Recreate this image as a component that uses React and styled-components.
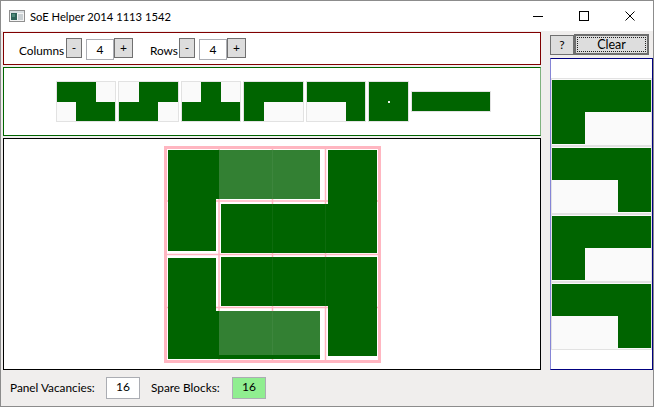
import React from 'react';
import styled, { createGlobalStyle } from 'styled-components';

const FONT = `"Lato", "Noto Sans", "Liberation Sans", sans-serif`;
const DARK = '#006400';
const LIGHT = '#338033';
const PINK = '#ffb6c1';

const Global = createGlobalStyle`
  html, body { margin: 0; padding: 0; background: #f0eeed; }
  body { font-family: ${FONT}; font-size: 12px; color: #000; }
  * { box-sizing: border-box; }
`;

const Window = styled.div`
  width: 654px;
  height: 407px;
  border: 1px solid #8c8c8c;
  background: #f0eeed;
  display: flex;
  flex-direction: column;
  overflow: hidden;
`;

const TitleBar = styled.div`
  height: 30px;
  background: #fff;
  display: flex;
  align-items: center;
  padding-left: 8px;
  flex-shrink: 0;
`;

const Title = styled.span`
  margin-left: 5px;
  font-size: 11.2px;
  line-height: 16px;
  margin-top: 1px;
`;

const WinButtons = styled.div`
  margin-left: auto;
  display: flex;
  height: 30px;
`;

const WinButton = styled.div`
  width: 46px;
  height: 30px;
  display: flex;
  align-items: center;
  justify-content: center;
`;

const Body = styled.div`
  flex: 1;
  display: flex;
  flex-direction: column;
  padding: 1px 0 0 1px;
`;

const MainRow = styled.div`
  display: flex;
  height: 338px;
  gap: 9px;
`;

const LeftColumn = styled.div`
  width: 538px;
  margin-left: 1px;
  display: flex;
  flex-direction: column;
  gap: 2px;
`;

const Toolbar = styled.div`
  height: 33px;
  border: 1px solid #800000;
  background: #fff;
  display: flex;
  align-items: flex-start;
  padding: 5px 0 0 15px;
`;

const Label = styled.span`
  width: ${p => p.$w}px;
  margin-left: ${p => p.$ml || 0}px;
  padding-top: 5px;
  font-size: 11.8px;
  line-height: 16px;
  white-space: nowrap;
`;

const StepButton = styled.div`
  width: ${p => p.$w}px;
  height: 20px;
  background: #dddddd;
  border: 1px solid #707070;
  display: flex;
  align-items: center;
  justify-content: center;
  font-size: 12px;
  line-height: 16px;
  margin-right: ${p => p.$mr || 0}px;
`;

const NumBox = styled.div`
  width: ${p => p.$w}px;
  height: ${p => p.$h}px;
  margin-top: ${p => p.$mt || 0}px;
  border: 1px solid #abadb3;
  background: ${p => p.$bg || '#fff'};
  text-align: center;
  line-height: ${p => p.$lh}px;
  font-size: 12px;
`;

const Strip = styled.div`
  height: 69px;
  border: 1px solid ${DARK};
  border-right-color: #7fb27f;
  background: #fff;
  display: flex;
  align-items: center;
  justify-content: center;
  gap: 2px;
  padding-left: 3px;
`;

const PieceCard = styled.div`
  display: grid;
  grid-template-columns: repeat(${p => p.$cols}, ${p => p.$cw}px);
  grid-auto-rows: ${p => p.$ch}px;
  padding: ${p => p.$pad || '0'};
  border: 1px solid #e2e2e2;
  background: #fafafa;
  flex-shrink: 0;
  position: relative;
`;

const Cell = styled.div`
  background: ${p => (p.$on ? DARK : 'transparent')};
`;

const Dot = styled.div`
  position: absolute;
  left: 50%;
  top: 50%;
  width: 2px;
  height: 2px;
  margin: -1px 0 0 -1px;
  background: #e8f0e8;
`;

const MainPanel = styled.div`
  height: 232px;
  border: 1px solid #000;
  background: #fff;
  display: flex;
  align-items: center;
  justify-content: center;
  padding-left: 1px;
`;

const RightColumn = styled.div`
  width: 103px;
  display: flex;
  flex-direction: column;
  padding-top: 2px;
`;

const ButtonRow = styled.div`
  display: flex;
  height: 21px;
  align-items: flex-start;
`;

const HelpButton = styled.div`
  width: 24px;
  height: 20px;
  margin-top: 1px;
  background: #dddddd;
  border: 1px solid #707070;
  display: flex;
  align-items: center;
  justify-content: center;
  font-size: 12px;
  line-height: 16px;
`;

const ClearButton = styled.div`
  width: 75px;
  height: 21px;
  background: #dddddd;
  border: 2px solid #6e6e6e;
  position: relative;
  display: flex;
  align-items: center;
  justify-content: center;
  font-size: 12.5px;
  line-height: 16px;
  &::after {
    content: '';
    position: absolute;
    inset: 1px;
    border: 1px dotted #202020;
  }
`;

const ListPanel = styled.div`
  margin-top: 3px;
  height: 312px;
  border: 1px solid #000080;
  border-left-color: #8585d6;
  background: #fff;
  padding-top: 19px;
  display: flex;
  flex-direction: column;
`;

const StatusBar = styled.div`
  height: 36px;
  display: flex;
  align-items: center;
  padding-left: 8px;
`;

const StatLabel = styled.span`
  width: ${p => p.$w}px;
  margin-left: ${p => p.$ml || 0}px;
  line-height: 16px;
  white-space: nowrap;
  font-size: 11.8px;
`;

const Piece = ({ rows, cw, ch, pad, dot }) => (
  <PieceCard $cols={rows[0].length} $cw={cw} $ch={ch} $pad={pad}>
    {rows.flat().map((v, i) => (
      <Cell key={i} $on={v === 1} />
    ))}
    {dot && <Dot />}
  </PieceCard>
);

const stripPieces = [
  [[1, 1, 0], [0, 1, 1]],
  [[0, 1, 1], [1, 1, 0]],
  [[0, 1, 0], [1, 1, 1]],
  [[1, 1, 1], [1, 0, 0]],
  [[1, 1, 1], [0, 0, 1]],
  [[1, 1], [1, 1]],
  [[1, 1, 1, 1]],
];

const listPieces = [
  [[1, 1, 1], [1, 0, 0]],
  [[1, 1, 1], [0, 0, 1]],
  [[1, 1, 1], [1, 0, 0]],
  [[1, 1, 1], [0, 0, 1]],
];

const AppIcon = () => (
  <svg width="16" height="12" viewBox="0 0 16 12">
    <rect x="0.5" y="0.5" width="15" height="11" fill="#f4f4f4" stroke="#8f8f8f" />
    <rect x="1" y="1" width="14" height="2" fill="#d8dde0" />
    <rect x="2" y="3" width="6" height="7" fill="#2f6258" />
    <rect x="3" y="4" width="3" height="3" fill="#4f8a7a" />
    <rect x="9" y="4" width="5" height="6" fill="#c9cfd2" />
  </svg>
);

const Board = () => {
  const lines = [55, 108.5, 161.5];
  return (
    <svg width="217" height="217" viewBox="0 0 217 217">
      <rect x="1.5" y="1.5" width="214" height="214" fill="#fff" stroke={PINK} strokeWidth="3" />
      {lines.map(v => (
        <g key={v}>
          <line x1={v} y1="0" x2={v} y2="217" stroke={PINK} strokeWidth="1.5" />
          <line x1="0" y1={v} x2="217" y2={v} stroke={PINK} strokeWidth="1.5" />
        </g>
      ))}
      <polygon points="4,4 156,4 156,53 52,53 52,105 4,105" fill={DARK} />
      <rect x="55" y="4" width="101" height="49" fill={LIGHT} />
      <polygon points="164,4 213,4 213,107 57,107 57,58 164,58" fill={DARK} />
      <polygon points="57,111 213,111 213,210 164,210 164,160 57,160" fill={DARK} />
      <polygon points="4,112 52,112 52,165 156,165 156,213 4,213" fill={DARK} />
      <rect x="55" y="165" width="101" height="44" fill={LIGHT} />
      <g stroke="rgba(255,255,255,0.05)" strokeWidth="1">
        <line x1="108.5" y1="4" x2="108.5" y2="53" />
        <line x1="108.5" y1="58" x2="108.5" y2="107" />
        <line x1="161.5" y1="58" x2="161.5" y2="107" />
        <line x1="108.5" y1="111" x2="108.5" y2="160" />
        <line x1="161.5" y1="111" x2="161.5" y2="160" />
        <line x1="108.5" y1="165" x2="108.5" y2="209" />
      </g>
    </svg>
  );
};

export default function App() {
  return (
    <>
      <Global />
      <Window>
        <TitleBar>
          <AppIcon />
          <Title>SoE Helper 2014 1113 1542</Title>
          <WinButtons>
            <WinButton>
              <svg width="10" height="10" viewBox="0 0 10 10">
                <line x1="0" y1="5.5" x2="10" y2="5.5" stroke="#000" strokeWidth="1" />
              </svg>
            </WinButton>
            <WinButton>
              <svg width="10" height="10" viewBox="0 0 10 10">
                <rect x="0.5" y="0.5" width="9" height="9" fill="none" stroke="#000" strokeWidth="1" />
              </svg>
            </WinButton>
            <WinButton>
              <svg width="10" height="10" viewBox="0 0 10 10">
                <path d="M0.5 0.5 L9.5 9.5 M9.5 0.5 L0.5 9.5" stroke="#000" strokeWidth="1" />
              </svg>
            </WinButton>
          </WinButtons>
        </TitleBar>
        <Body>
          <MainRow>
            <LeftColumn>
              <Toolbar>
                <Label $w={47}>Columns</Label>
                <StepButton $w={16} $mr={4}>-</StepButton>
                <NumBox $w={28} $h={21} $lh={19} $mt={1}>4</NumBox>
                <StepButton $w={19}>+</StepButton>
                <Label $w={29} $ml={17}>Rows</Label>
                <StepButton $w={16} $mr={4}>-</StepButton>
                <NumBox $w={28} $h={21} $lh={19} $mt={1}>4</NumBox>
                <StepButton $w={19}>+</StepButton>
              </Toolbar>
              <Strip>
                {stripPieces.map((rows, i) => (
                  <Piece key={i} rows={rows} cw={19.5} ch={19.5} dot={i === 5} />
                ))}
              </Strip>
              <MainPanel>
                <Board />
              </MainPanel>
            </LeftColumn>
            <RightColumn>
              <ButtonRow>
                <HelpButton>?</HelpButton>
                <ClearButton>Clear</ClearButton>
              </ButtonRow>
              <ListPanel>
                {listPieces.map((rows, i) => (
                  <Piece key={i} rows={rows} cw={33} ch={32} pad="1px 0" />
                ))}
              </ListPanel>
            </RightColumn>
          </MainRow>
          <StatusBar>
            <StatLabel $w={96}>Panel Vacancies:</StatLabel>
            <NumBox $w={34} $h={22} $lh={18}>16</NumBox>
            <StatLabel $w={81} $ml={11}>Spare Blocks:</StatLabel>
            <NumBox $w={34} $h={22} $lh={18} $bg="#90ee90">16</NumBox>
          </StatusBar>
        </Body>
      </Window>
    </>
  );
}
